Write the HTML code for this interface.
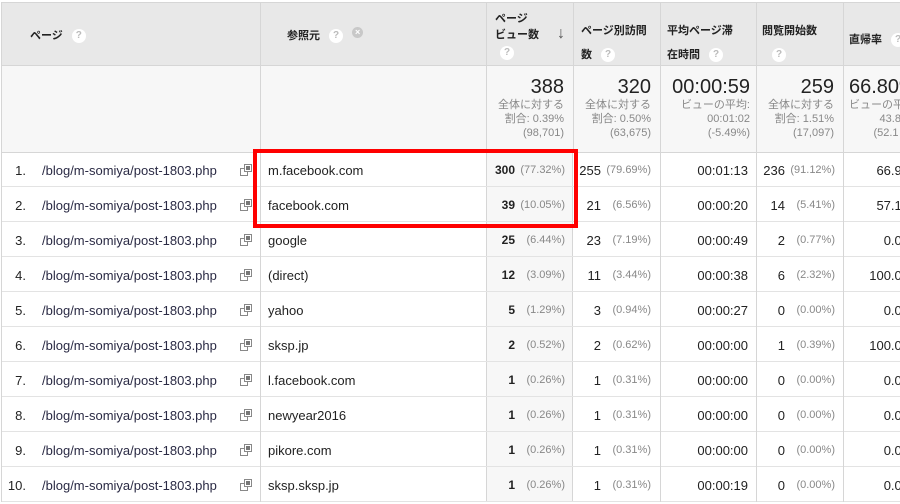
<!DOCTYPE html>
<html><head><meta charset="utf-8"><style>
*{margin:0;padding:0;box-sizing:border-box}
body{width:900px;height:504px;overflow:hidden;background:#fff;font-family:"Liberation Sans","Noto Sans CJK JP",sans-serif;color:#222;position:relative}
table{position:absolute;left:1px;top:2px;border-collapse:collapse;table-layout:fixed;width:920px}
td,th{border:1px solid #d6d6d6;overflow:hidden;white-space:nowrap;position:relative}
th{background:#e8e8e8;height:63px;font-size:11px;font-weight:bold;text-align:left;vertical-align:top;color:#222}
tr.sum td{background:#f7f7f7;height:87px;text-align:right;vertical-align:top;padding:10px 7px 0 0}
.big{font-size:20px;color:#222;line-height:22px}
.sm{font-size:11px;color:#888;line-height:14px}
.q{display:inline-block;width:14px;height:14px;border-radius:50%;background:#fff;color:#bbb;font-size:10px;text-align:center;line-height:14px;font-weight:bold;vertical-align:middle}
.x{display:inline-block;width:11px;height:11px;border-radius:50%;background:#c8c8c8;color:#fff;font-size:9px;text-align:center;line-height:11px}
.ab{position:absolute}
.n{position:absolute;text-align:right;top:11px}
.p{position:absolute;text-align:right;top:12px;font-size:11px;color:#888}
.pv{background:#f7f7f7}
.ic{position:absolute;left:239px;top:12px;width:12px;height:12px}
#box{position:absolute;left:253px;top:149px;width:325px;height:79px;border:4px solid #f00}
</style></head><body>
<table>
<colgroup><col style="width:259px"><col style="width:226px"><col style="width:87px"><col style="width:87px"><col style="width:96px"><col style="width:87px"><col style="width:78px"></colgroup>
<tr>
<th><span class="ab" style="left:28px;top:24px">ページ <span class="q" style="margin-left:6px">?</span></span></th>
<th><span class="ab" style="left:26px;top:24px">参照元 <span class="q" style="margin-left:6px">?</span> <span class="x" style="margin-left:6px;vertical-align:4px">×</span></span></th>
<th><span class="ab" style="left:8px;top:8px;line-height:16px">ページ<br>ビュー数</span><span class="ab" style="left:70px;top:22px;font-size:16px;font-weight:bold;color:#555">↓</span><span class="q ab" style="left:13px;top:43px">?</span></th>
<th><span class="ab" style="left:7px;top:16px;line-height:24px">ページ別訪問<br>数 <span class="q" style="margin-left:6px">?</span></span></th>
<th><span class="ab" style="left:6px;top:16px;line-height:24px">平均ページ滞<br>在時間 <span class="q" style="margin-left:6px">?</span></span></th>
<th><span class="ab" style="left:5px;top:16px;line-height:24px">閲覧開始数<br><span class="q" style="margin-left:10px">?</span></span></th>
<th><span class="ab" style="left:5px;top:28px">直帰率 <span class="q" style="margin-left:6px">?</span></span></th>
</tr>
<tr class="sum">
<td></td><td></td>
<td style="padding-right:9px"><div class="big">388</div><div class="sm">全体に対する<br>割合: 0.39%<br>(98,701)</div></td>
<td style="padding-right:9px"><div class="big">320</div><div class="sm">全体に対する<br>割合: 0.50%<br>(63,675)</div></td>
<td style="padding-right:6px"><div class="big">00:00:59</div><div class="sm">ビューの平均:<br>00:01:02<br>(-5.49%)</div></td>
<td style="padding-right:9px"><div class="big">259</div><div class="sm">全体に対する<br>割合: 1.51%<br>(17,097)</div></td>
<td style="text-align:left;padding-left:5px"><div class="big">66.80%</div><div class="sm">ビューの平均:<br>&nbsp;&nbsp;&nbsp;&nbsp;&nbsp;&nbsp;&nbsp;&nbsp;&nbsp;&nbsp;43.8<br>&nbsp;&nbsp;&nbsp;&nbsp;&nbsp;&nbsp;&nbsp;&nbsp;(52.1</div></td>
</tr>
</table>
<div id="rows"></div>
<script>
var d=[["m.facebook.com",300,"77.32%",255,"79.69%","00:01:13",236,"91.12%","66.9"],
["facebook.com",39,"10.05%",21,"6.56%","00:00:20",14,"5.41%","57.1"],
["google",25,"6.44%",23,"7.19%","00:00:49",2,"0.77%","0.0"],
["(direct)",12,"3.09%",11,"3.44%","00:00:38",6,"2.32%","100.0"],
["yahoo",5,"1.29%",3,"0.94%","00:00:27",0,"0.00%","0.0"],
["sksp.jp",2,"0.52%",2,"0.62%","00:00:00",1,"0.39%","100.0"],
["l.facebook.com",1,"0.26%",1,"0.31%","00:00:00",0,"0.00%","0.0"],
["newyear2016",1,"0.26%",1,"0.31%","00:00:00",0,"0.00%","0.0"],
["pikore.com",1,"0.26%",1,"0.31%","00:00:00",0,"0.00%","0.0"],
["sksp.sksp.jp",1,"0.26%",1,"0.31%","00:00:19",0,"0.00%","0.0"]];
var h="";
var ic='<svg class="ic" viewBox="0 0 12 12"><rect x="0.5" y="4.5" width="7" height="7" fill="#fff" stroke="#888"/><rect x="4.5" y="0.5" width="7" height="7" fill="#fff" stroke="#888"/><rect x="6" y="2" width="4" height="4" fill="#777"/></svg>';
for(var i=0;i<10;i++){var r=d[i],t=152+35*i;
h+='<div style="position:absolute;left:1px;top:'+t+'px;width:920px;height:35px;border-bottom:1px solid #e3e3e3;font-size:13px">'+
'<div style="position:absolute;left:0;top:0;width:1px;height:35px;background:#d6d6d6"></div>'+
'<div style="position:absolute;left:259px;top:0;width:1px;height:35px;background:#d6d6d6"></div>'+
'<div class="pv" style="position:absolute;left:485px;top:0;width:87px;height:34px;border-left:1px solid #d6d6d6;border-right:1px solid #d6d6d6"></div>'+
'<div style="position:absolute;left:659px;top:0;width:1px;height:35px;background:#d6d6d6"></div>'+
'<div style="position:absolute;left:755px;top:0;width:1px;height:35px;background:#d6d6d6"></div>'+
'<div style="position:absolute;left:842px;top:0;width:1px;height:35px;background:#d6d6d6"></div>'+
'<span class="n" style="left:0;width:25px">'+(i+1)+'.</span>'+
'<span class="n" style="left:41px;text-align:left;color:#2a2a44">/blog/m-somiya/post-1803.php</span>'+ic+
'<span class="n" style="left:267px;text-align:left">'+r[0]+'</span>'+
'<span class="n" style="left:484px;width:30px;font-weight:bold;font-size:12px">'+r[1]+'</span>'+
'<span class="p" style="left:514px;width:50px">('+r[2]+')</span>'+
'<span class="n" style="left:570px;width:30px">'+r[3]+'</span>'+
'<span class="p" style="left:600px;width:50px">('+r[4]+')</span>'+
'<span class="n" style="left:670px;width:77px">'+r[5]+'</span>'+
'<span class="n" style="left:754px;width:30px">'+r[6]+'</span>'+
'<span class="p" style="left:784px;width:50px">('+r[7]+')</span>'+
'<span class="n" style="left:838px;width:70px">'+r[8]+'0</span>'+
'</div>';}
document.getElementById("rows").innerHTML=h;
</script>
<div id="box"></div>
</body></html>
